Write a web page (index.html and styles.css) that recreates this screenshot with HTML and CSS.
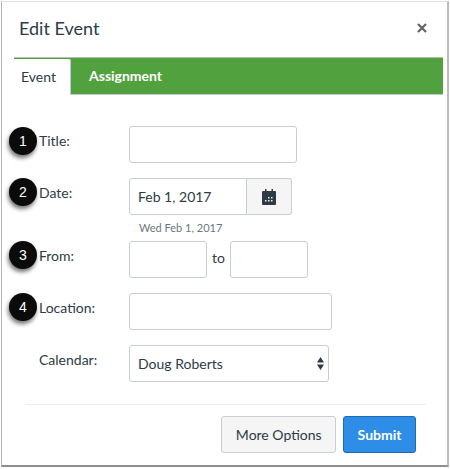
FILE: index.html
```html
<!DOCTYPE html>
<html lang="en">
<head>
  <meta charset="UTF-8" />
  <title>Edit Event</title>
  <link rel="stylesheet" href="styles.css">
</head>
<body>

<div class="dialog">
  <div class="dialog-header">
    <h1 class="dialog-title">Edit Event</h1>
    <svg class="close-icon" width="10" height="10" viewBox="0 0 10 10"><path d="M1 1L9 9M9 1L1 9" stroke="#5f6468" stroke-width="2.2" fill="none"/></svg>
  </div>

  <div class="tabs">
    <div class="tab tab-active">Event</div>
    <div class="tab tab-other">Assignment</div>
  </div>

  <form class="form">
    <div class="row row-title">
      <span class="badge">1</span>
      <label class="label">Title:</label>
      <div class="input input-title"></div>
    </div>

    <div class="row row-date">
      <span class="badge">2</span>
      <label class="label">Date:</label>
      <div class="date-group">
        <div class="input input-date">Feb 1, 2017</div>
        <div class="date-button">
          <svg width="14" height="17" viewBox="0 0 14 17"><path fill="#2d3b45" fill-rule="evenodd" d="M1 3h2V1h1.5v2h5V1H11v2h2a1 1 0 0 1 1 1v12a1 1 0 0 1-1 1H1a1 1 0 0 1-1-1V4a1 1 0 0 1 1-1zM6 9v1.5h1.5V9zm3 0v1.5h1.5V9zM3 12v1.5h1.5V12zm3 0v1.5h1.5V12zm3 0v1.5h1.5V12z"/></svg>
        </div>
      </div>
    </div>
    <div class="date-hint">Wed Feb 1, 2017</div>

    <div class="row row-from">
      <span class="badge">3</span>
      <label class="label">From:</label>
      <div class="input input-time"></div>
      <span class="to">to</span>
      <div class="input input-time"></div>
    </div>

    <div class="row row-location">
      <span class="badge">4</span>
      <label class="label">Location:</label>
      <div class="input input-location"></div>
    </div>

    <div class="row row-calendar">
      <label class="label">Calendar:</label>
      <div class="input input-select">
        Doug Roberts
        <svg class="select-arrows" width="7" height="13" viewBox="0 0 7 13"><path fill="#2d3b45" d="M3.5 0L7 5.5H0zM0 7.5h7L3.5 13z"/></svg>
      </div>
    </div>
  </form>

  <div class="footer">
    <button type="button" class="btn">More Options</button>
    <button type="button" class="btn btn-primary">Submit</button>
  </div>
</div>

</body>
</html>
```

FILE: styles.css
```css
body {
  margin: 0;
  font-family: Lato, "Liberation Sans", sans-serif;
  color: #2d3b45;
  background: #fff;
}
.dialog {
  box-sizing: border-box;
  width: 448px;
  height: 466px;
  margin: 1px 0 0 1px;
  border: 1px solid #e2e2e2;
  border-left-color: #b4b4b4;
  border-right: 2px solid #bcbcbc;
  border-bottom: 2px solid #8f8f8f;
  background: #fff;
}
.dialog-header {
  display: flex;
  align-items: center;
  justify-content: space-between;
  box-sizing: border-box;
  height: 55px;
  padding: 0 20px 4px 17px;
}
.dialog-title {
  margin: 0;
  font-size: 18px;
  font-weight: 400;
}
.close-icon {
  display: block;
}
.tabs {
  display: flex;
  box-sizing: border-box;
  height: 38px;
  margin: 0 4px 0 12px;
  background: #52a13f;
  border-top: 1px solid #b5bfb3;
  border-bottom: 1px solid #c4cbd0;
}
.tab {
  font-size: 14px;
  line-height: 36px;
}
.tab-active {
  box-sizing: border-box;
  width: 57px;
  height: 37px;
  padding-left: 7px;
  background: #fff;
  border-top: 1px solid #52a13f;
  border-right: 1px solid #c4cbd0;
  border-radius: 0 3px 0 0;
  line-height: 35px;
}
.tab-other {
  margin-left: 18px;
  color: #fff;
  font-weight: 700;
}
.form {
  padding: 31px 0 0 37px;
}
.row {
  display: flex;
  align-items: flex-start;
  position: relative;
}
.label {
  width: 90px;
  flex: none;
  padding-top: 6px;
  font-size: 14px;
  line-height: 17px;
}
.input {
  box-sizing: border-box;
  height: 37px;
  border: 1px solid #c7cdd1;
  border-radius: 3px;
  background: #fff;
  font-size: 14px;
  line-height: 35px;
  padding: 0 8px;
}
.input-title {
  width: 168px;
}
.row-date {
  margin-top: 15px;
}
.date-group {
  display: flex;
}
.input-date {
  width: 118px;
  border-radius: 3px 0 0 3px;
}
.date-button {
  box-sizing: border-box;
  display: flex;
  align-items: center;
  justify-content: center;
  width: 45px;
  height: 37px;
  border: 1px solid #c7cdd1;
  border-left: none;
  border-radius: 0 3px 3px 0;
  background: #f5f5f5;
}
.date-hint {
  height: 26px;
  padding-left: 100px;
  font-size: 11px;
  line-height: 25px;
  color: #6b7780;
}
.input-time {
  width: 78px;
}
.to {
  width: 23px;
  padding: 8px 0 0 5px;
  box-sizing: border-box;
  font-size: 14px;
  line-height: 17px;
}
.row-location {
  margin-top: 15px;
}
.input-location {
  width: 203px;
}
.row-calendar {
  margin-top: 15px;
}
.input-select {
  display: flex;
  align-items: center;
  justify-content: space-between;
  width: 200px;
  padding-right: 4px;
}
.select-arrows {
  display: block;
}
.badge {
  position: absolute;
  left: -30px;
  top: 0;
  width: 28px;
  height: 28px;
  border-radius: 50%;
  background: #0b0b0b;
  color: #fff;
  font-family: "Liberation Sans", sans-serif;
  font-size: 14px;
  line-height: 28px;
  text-align: center;
  box-shadow: -1px 3px 4px rgba(0, 0, 0, 0.55);
}
.row-title .badge {
  top: 1px;
}
.footer {
  display: flex;
  justify-content: flex-end;
  gap: 7px;
  margin: 22px 21px 0 24px;
  padding: 11px 10px 0 0;
  border-top: 1px solid #ededed;
}
.btn {
  box-sizing: border-box;
  height: 37px;
  padding: 0 13.5px;
  font-family: Lato, "Liberation Sans", sans-serif;
  font-size: 14px;
  color: #2d3b45;
  background: #f5f5f5;
  border: 1px solid #c7cdd1;
  border-radius: 3px;
}
.btn-primary {
  color: #fff;
  font-weight: 700;
  background: #2e8de6;
  border-color: #1f6bb0;
}
```
